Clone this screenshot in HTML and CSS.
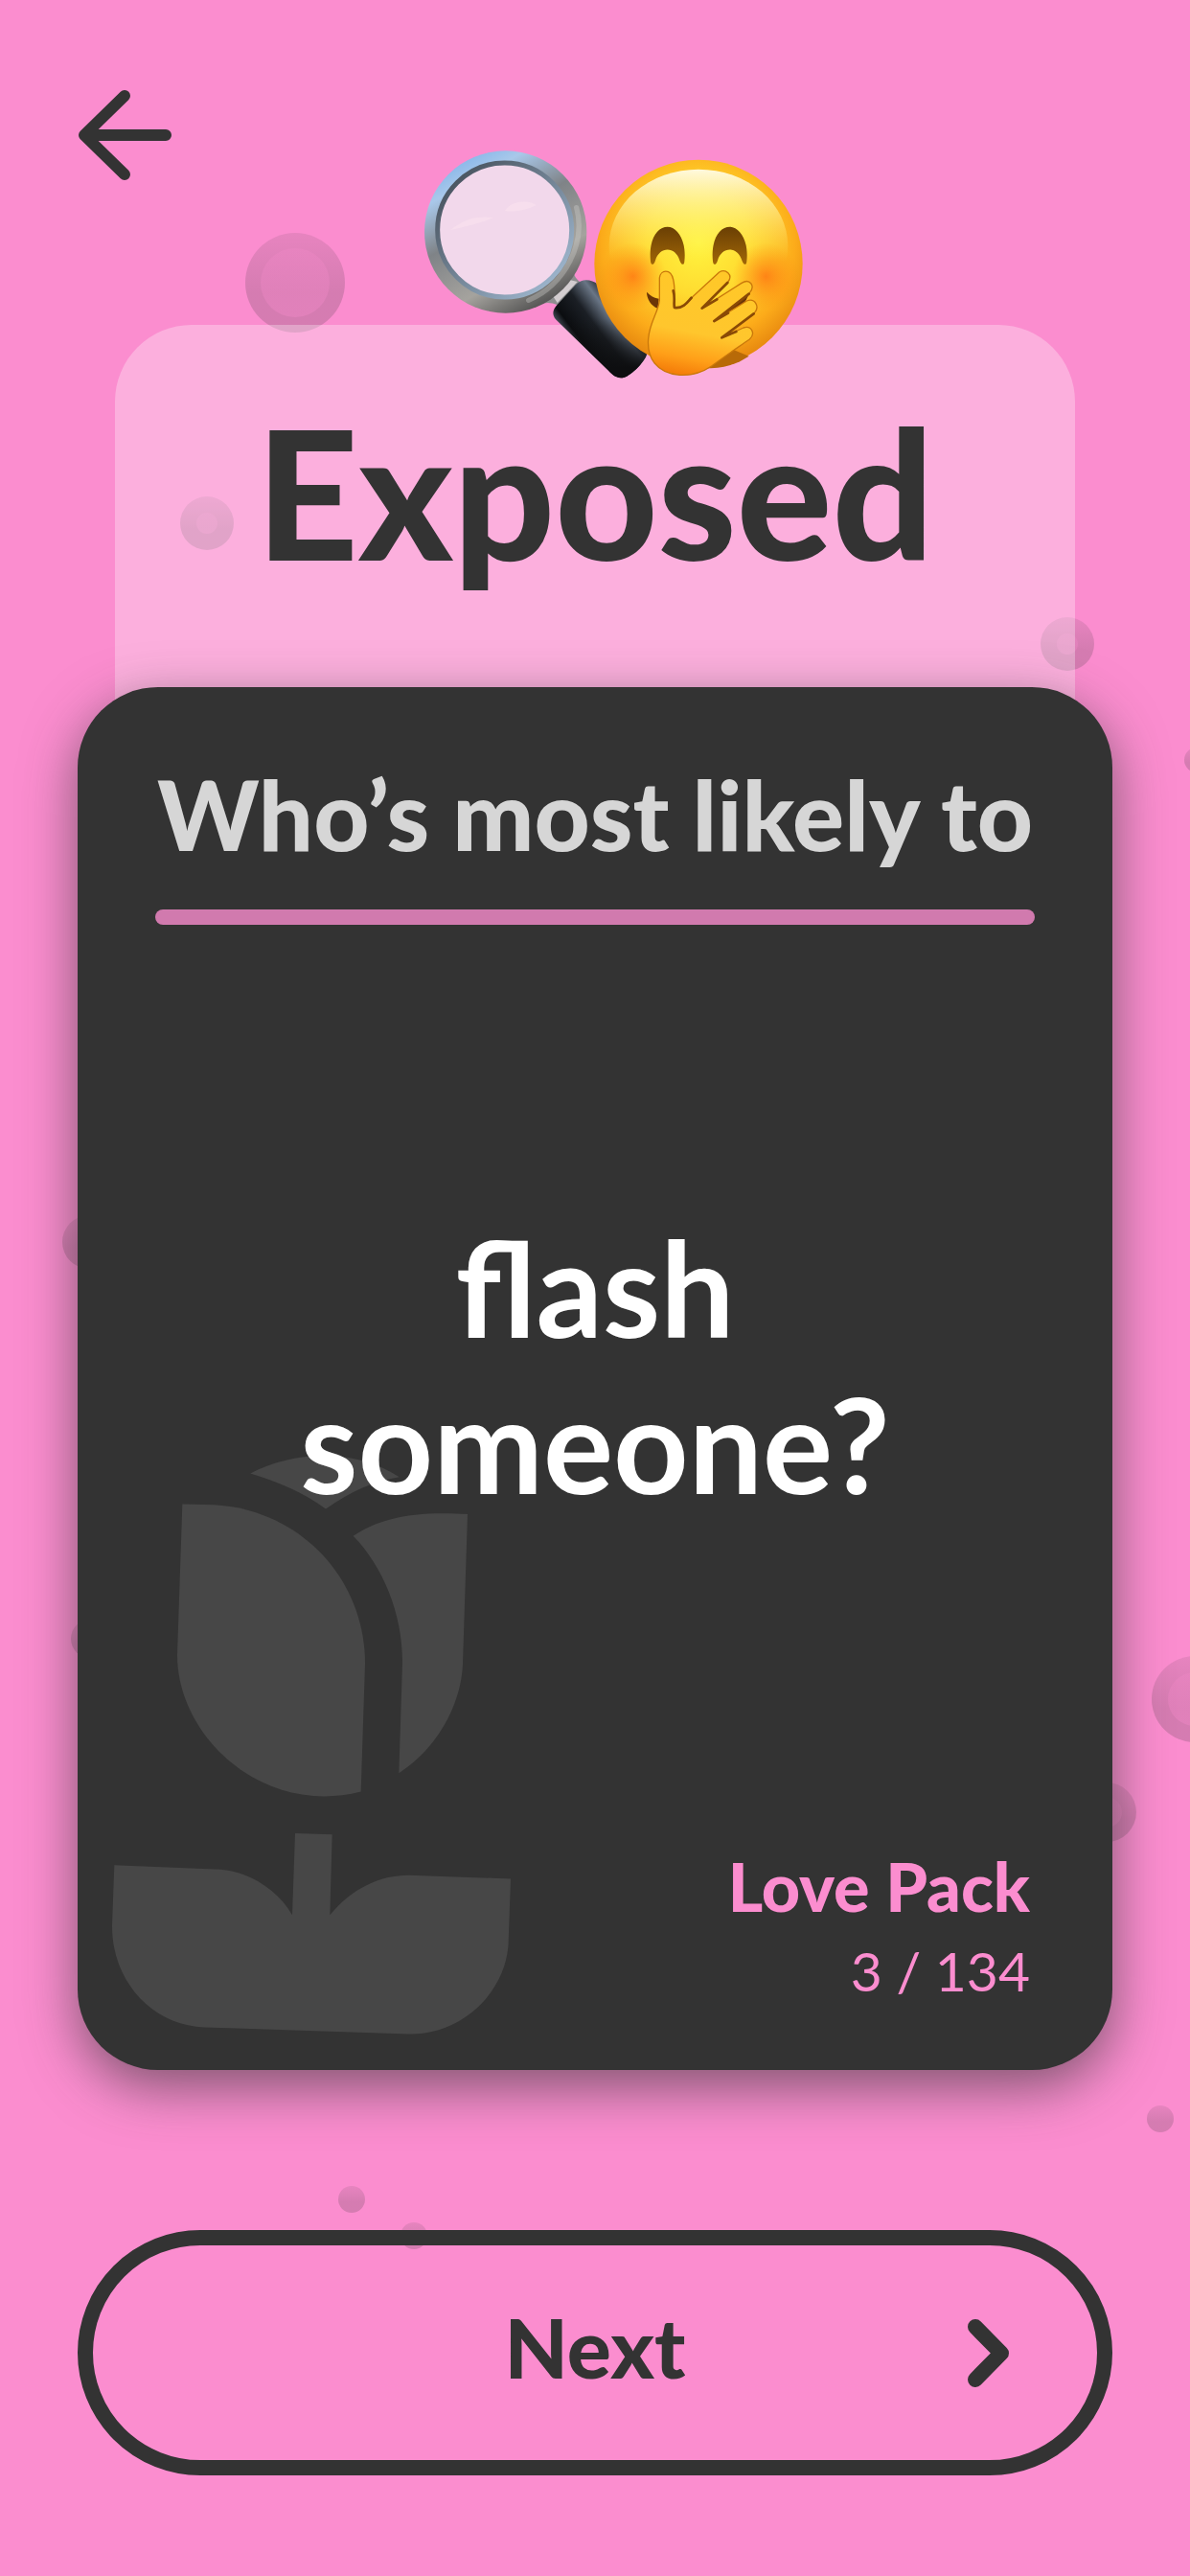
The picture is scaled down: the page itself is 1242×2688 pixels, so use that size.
FILE: index.html
```html
<!DOCTYPE html>
<html lang="en">
<head>
<meta charset="utf-8">
<meta name="viewport" content="width=device-width, initial-scale=1">
<title>Exposed</title>
<link rel="stylesheet" href="styles.css">
</head>
<body>
<svg class="bubbles" viewBox="0 0 1242 2688" preserveAspectRatio="xMidYMin slice" aria-hidden="true">
  <defs>
    <linearGradient id="bubble" x1="0" y1="0" x2="0" y2="1">
      <stop offset="0" stop-color="#333" stop-opacity=".1"/>
      <stop offset=".6" stop-color="#333" stop-opacity=".19"/>
      <stop offset="1" stop-color="#333" stop-opacity=".19"/>
    </linearGradient>
    <linearGradient id="core" x1="0" y1="0" x2="0" y2="1">
      <stop offset="0" stop-color="#fb8dcf" stop-opacity=".2"/>
      <stop offset="1" stop-color="#fb8dcf" stop-opacity=".32"/>
    </linearGradient>
  </defs>
  <g fill="url(#bubble)">
    <circle cx="308" cy="295" r="52"/>
    <circle cx="216" cy="546" r="28"/>
    <circle cx="1114" cy="672" r="28"/>
    <circle cx="1249" cy="793" r="13"/>
    <circle cx="93" cy="1296" r="28"/>
    <circle cx="94" cy="1710" r="20"/>
    <circle cx="1247" cy="1773" r="45"/>
    <circle cx="1155" cy="1891" r="31"/>
    <circle cx="1211" cy="2211" r="14"/>
    <circle cx="367" cy="2295" r="14"/>
    <circle cx="432" cy="2333" r="14"/>
  </g>
  <g fill="url(#core)">
    <circle cx="308" cy="295" r="36"/>
    <circle cx="216" cy="546" r="11"/>
    <circle cx="1114" cy="672" r="11"/>
    <circle cx="1247" cy="1773" r="28"/>
    <circle cx="1155" cy="1891" r="16"/>
  </g>
</svg>

<main class="screen">
  <header class="topbar">
    <button class="back" type="button" aria-label="Back">
      <svg viewBox="0 0 98 94" aria-hidden="true"><path d="M49 6 7 47l42 41M10 47h82" /></svg>
    </button>
  </header>

  <section class="category">
    <svg class="emoji" viewBox="0 0 1320 810" role="img" aria-label="Magnifying glass and giggling face">
      <defs>
        <linearGradient id="rim" x1=".15" y1="0" x2=".7" y2="1">
          <stop offset="0" stop-color="#76aeea"/>
          <stop offset=".2" stop-color="#a9c8ea"/>
          <stop offset=".45" stop-color="#7f8387"/>
          <stop offset=".75" stop-color="#a5a39e"/>
          <stop offset="1" stop-color="#4c4c4c"/>
        </linearGradient>
        <linearGradient id="rimEdge" x1="0" y1="0" x2="1" y2="1">
          <stop offset="0" stop-color="#3d4650"/>
          <stop offset="1" stop-color="#a9c3dc"/>
        </linearGradient>
        <linearGradient id="grip" gradientUnits="userSpaceOnUse" x1="540" y1="680" x2="700" y2="560">
          <stop offset="0" stop-color="#5b6673"/>
          <stop offset=".18" stop-color="#0b0d10"/>
          <stop offset=".5" stop-color="#1b1f25"/>
          <stop offset=".78" stop-color="#6a7686"/>
          <stop offset="1" stop-color="#15181c"/>
        </linearGradient>
        <linearGradient id="gripEnd" x1="0" y1="0" x2="0" y2="1">
          <stop offset=".4" stop-color="#111" stop-opacity="0"/>
          <stop offset=".9" stop-color="#0d0e10"/>
        </linearGradient>
        <radialGradient id="face" cx=".5" cy=".4" r=".62">
          <stop offset="0" stop-color="#fff43f"/>
          <stop offset=".4" stop-color="#ffdb30"/>
          <stop offset=".75" stop-color="#fcab1a"/>
          <stop offset="1" stop-color="#e2800c"/>
        </radialGradient>
        <linearGradient id="shine" x1="0" y1="0" x2="0" y2="1">
          <stop offset="0" stop-color="#fffce8" stop-opacity=".95"/>
          <stop offset=".3" stop-color="#fff9a0" stop-opacity=".5"/>
          <stop offset=".6" stop-color="#fff060" stop-opacity="0"/>
        </linearGradient>
        <radialGradient id="blush">
          <stop offset="0" stop-color="#ff6a10" stop-opacity=".7"/>
          <stop offset="1" stop-color="#ff8a10" stop-opacity="0"/>
        </radialGradient>
        <linearGradient id="eye" x1="0" y1="0" x2="0" y2="1">
          <stop offset="0" stop-color="#6a3f04"/>
          <stop offset="1" stop-color="#a06607"/>
        </linearGradient>
        <linearGradient id="hand" x1=".6" y1="0" x2=".4" y2="1">
          <stop offset="0" stop-color="#ffc828"/>
          <stop offset=".6" stop-color="#ffc62d"/>
          <stop offset=".85" stop-color="#ff9f18"/>
          <stop offset="1" stop-color="#f57f0a"/>
        </linearGradient>
      </defs>
      <path d="M552 370C530 425 530 445 560 465L485 535C455 520 430 530 395 548Z" fill="#8d8e8f"/>
      <path d="M548 462 485 528 470 505 520 455Z" fill="#d3cdd0"/>
      <circle cx="323" cy="306" r="254" fill="url(#rim)"/>
      <path d="M545 230C575 340 510 470 395 520" fill="none" stroke="#d0d0ce" stroke-width="16" stroke-linecap="round" opacity=".35"/>
      <circle cx="320" cy="300" r="210" fill="#f2d8eb" stroke="url(#rimEdge)" stroke-width="15"/>
      <path d="M150 300C200 260 240 255 285 262C240 280 200 290 150 300ZM320 240C345 205 395 205 420 222C385 240 345 245 320 240Z" fill="#fbe3ef" opacity=".5"/>
      <path d="M484 535 542 472C562 450 592 455 612 470L765 685C768 705 715 757 695 761C670 768 655 750 640 735L480 580C468 565 470 550 484 535Z" fill="url(#grip)"/>
      <path d="M484 535 542 472C562 450 592 455 612 470L765 685C768 705 715 757 695 761C670 768 655 750 640 735L480 580C468 565 470 550 484 535Z" fill="url(#gripEnd)"/>
      <circle cx="927" cy="406" r="326" fill="url(#face)"/>
      <ellipse cx="927" cy="350" rx="280" ry="240" fill="url(#shine)"/>
      <circle cx="722" cy="445" r="105" fill="url(#blush)"/>
      <circle cx="1138" cy="445" r="105" fill="url(#blush)"/>
      <path d="M777 398C770 330 798 290 830 290S890 335 883 398C882 412 873 410 868 395C855 350 805 350 792 395C788 410 779 412 777 398Z" fill="url(#eye)"/>
      <path d="M972 398C965 330 993 290 1025 290S1085 335 1078 398C1077 412 1068 410 1063 395C1050 350 1000 350 987 395C983 410 974 412 972 398Z" fill="url(#eye)"/>
      <path d="M765 494C765 515 778 538 800 545L803 515C785 512 776 505 765 494Z" fill="#6b3507"/>
      <path d="M1088 480C1085 530 1040 570 975 588L1000 560Z" fill="#6b3507"/>
      <path d="M935 732C1010 735 1045 720 1085 695L1000 660Z" fill="#b86a08"/>
      <path d="M805 450C808 424 840 420 848 455C856 490 850 520 852 542C878 547 892 530 910 508L992 432C1012 420 1036 440 1020 462L938 545L1062 466C1088 450 1106 475 1087 497L976 585L1078 522C1104 512 1120 540 1102 560L1000 637L1068 606C1094 598 1106 625 1087 642C1050 668 1005 698 968 726C930 752 900 756 868 754C795 748 765 700 770 640C774 590 800 560 805 520Z" fill="url(#hand)" stroke="#c9780b" stroke-width="4" stroke-linejoin="round"/>
      <path d="M848 490C855 515 848 530 852 543C875 547 890 530 905 512M1018 465 938 545 985 517M1085 500 976 585 1020 560M1100 562 1000 637 1045 618" fill="none" stroke="#8a4a06" stroke-width="8" stroke-linecap="round" stroke-linejoin="round"/>
    </svg>
    <h1 class="title">Exposed</h1>
  </section>

  <article class="card">
    <svg class="flower" viewBox="0 0 1380 1568" preserveAspectRatio="none" aria-hidden="true">
      <path d="M484 89C620 33 810 25 950 98C870 108 795 135 720 177C650 136 565 108 484 89Z"/>
      <path d="M271 165L370 167C640 178 843 350 843 560L830 878C520 940 255 740 255 540Z"/>
      <path d="M806 244C890 200 990 182 1164 190L1149 560C1145 660 1070 770 949 832L960 560C962 440 900 320 806 244Z"/>
      <path d="M624 981 740 984 733 1184C800 1118 890 1085 980 1085L1299 1094 1292 1250C1288 1370 1150 1482 980 1479L340 1462C180 1458 50 1350 51 1210L58 1060 390 1071C475 1075 570 1120 615 1184Z"/>
    </svg>
    <h2 class="prompt">Who’s most likely to</h2>
    <p class="question">flash someone?</p>
    <footer class="pack">
      <strong class="pack-name">Love Pack</strong>
      <span class="pack-count">3 / 134</span>
    </footer>
  </article>

  <button class="next" type="button">
    <span>Next</span>
    <svg class="chevron" viewBox="0 0 43 71" aria-hidden="true"><path d="M8 8 35 35.500 8 63"/></svg>
  </button>
</main>
</body>
</html>
```
FILE: styles.css
```css
:root {
  --pink: #fb8dcf;
  --ink: #333;
}

* {
  box-sizing: border-box;
  margin: 0;
}

body {
  position: relative;
  background: var(--pink);
  color: var(--ink);
  font-family: Lato, "Open Sans", sans-serif;
}

button {
  border: 0;
  padding: 0;
  background: none;
  color: inherit;
  font: inherit;
  cursor: pointer;
}

.bubbles {
  position: absolute;
  inset: 0;
  width: 100%;
  height: 100%;
}

.screen {
  position: relative;
  display: flex;
  flex-direction: column;
  min-height: 100vh;
  padding: 94px 81px 105px;
}

.topbar {
  display: flex;
}

.back,
.back svg {
  display: block;
  width: 98px;
  height: 94px;
}

.back path,
.chevron path {
  fill: none;
  stroke: var(--ink);
  stroke-width: 12;
  stroke-linecap: round;
  stroke-linejoin: round;
}

.category {
  position: relative;
  margin: 151px 39px 0;
  padding: 74px 40px 184px;
  border-radius: 80px 80px 0 0;
  background: rgba(255, 255, 255, 0.3);
  text-align: center;
}

.emoji {
  position: absolute;
  top: -199px;
  left: calc(50% - 201px);
  width: 440px;
  height: 270px;
}

.title {
  font-size: 186px;
  font-weight: 900;
  line-height: 200px;
}

.card {
  position: relative;
  display: flex;
  flex: 1;
  flex-direction: column;
  margin-top: -80px;
  padding: 72px 81px 60px;
  border-radius: 84px;
  background: var(--ink);
  box-shadow: 0 18px 56px rgba(51, 51, 51, 0.62);
}

.flower {
  position: absolute;
  bottom: 0;
  left: 19px;
  width: 460px;
  height: 660px;
  fill: #474747;
}

.prompt {
  color: #d6d6d6;
  font-size: 101px;
  font-weight: 900;
  line-height: 120px;
  text-align: center;
  white-space: nowrap;
}

.prompt::after {
  content: "";
  display: block;
  height: 16px;
  margin-top: 40px;
  border-radius: 8px;
  background: #d17aae;
}

.question {
  position: relative;
  display: flex;
  flex: 1;
  flex-direction: column;
  justify-content: center;
  width: min-content;
  margin: 0 auto;
  padding-bottom: 40px;
  color: #fff;
  font-size: 137px;
  font-weight: 700;
  line-height: 163px;
  text-align: center;
}

.pack {
  display: flex;
  flex-direction: column;
  align-items: flex-end;
  padding-right: 5px;
  color: var(--pink);
}

.pack-name {
  font-size: 70px;
  font-weight: 900;
  line-height: 88px;
}

.pack-count {
  font-size: 57px;
  line-height: 88px;
}

.next {
  display: grid;
  grid-template-columns: 1fr auto 1fr;
  align-items: center;
  height: 256px;
  margin-top: 167px;
  padding: 0 92px;
  border: 16px solid var(--ink);
  border-radius: 128px;
  font-size: 86px;
  font-weight: 900;
  line-height: 112px;
}

.next span {
  grid-column: 2;
  padding-bottom: 12px;
}

.chevron {
  justify-self: end;
  width: 43px;
  height: 71px;
}

.chevron path {
  stroke-width: 16;
}
```
